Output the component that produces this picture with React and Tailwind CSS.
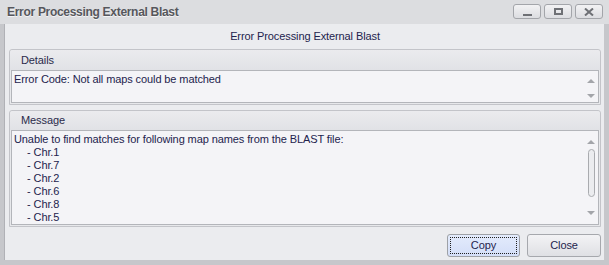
const FONT = { fontFamily: '"Liberation Sans", Arial, sans-serif' }

const CHRS = ['Chr.1', 'Chr.7', 'Chr.2', 'Chr.6', 'Chr.8', 'Chr.5']

function TitleButton({ children }) {
  return (
    <div className="w-[28px] h-[15px] rounded-[3px] border border-[#a3a5aa] bg-gradient-to-b from-[#f2f2f4] to-[#dcdde1] flex items-center justify-center">
      {children}
    </div>
  )
}

function ArrowUp() {
  return <div className="w-0 h-0 border-l-[4px] border-r-[4px] border-b-[4px] border-l-transparent border-r-transparent border-b-[#a3a5aa]" />
}

function ArrowDown() {
  return <div className="w-0 h-0 border-l-[4px] border-r-[4px] border-t-[4px] border-l-transparent border-r-transparent border-t-[#a3a5aa]" />
}

function Group({ title, className, children }) {
  return (
    <div className={`flex flex-col rounded-t-[3px] border border-[#c3c4c9] bg-[#e7e8eb] ${className}`}>
      <div className="h-[20px] flex items-center pl-[11px] text-[11px] text-[#2a2a4a] bg-gradient-to-b from-[#ebebee] to-[#e1e2e6] rounded-t-[3px]">
        {title}
      </div>
      <div className="flex-1 mx-[1px] mb-[1px] border border-[#b3b5ba] bg-[#f4f4f7] flex">
        {children}
      </div>
    </div>
  )
}

export default function App() {
  return (
    <div style={FONT} className="w-[609px] h-[265px] bg-[#c6c7cb] flex flex-col overflow-hidden">
      {/* title bar */}
      <div className="h-[24px] bg-[#dcdde0] flex items-center pl-[7px] pr-[6px] shrink-0">
        <span className="text-[12px] font-bold tracking-[-0.3px] text-[#56575c] [text-shadow:0_1px_0_#f4f4f6] flex-1">
          Error Processing External Blast
        </span>
        <div className="flex gap-[3px] -mt-[1px]">
          <TitleButton>
            <div className="w-[9px] h-[2px] bg-[#6e7075] mt-[6px]" />
          </TitleButton>
          <TitleButton>
            <div className="w-[9px] h-[7px] border-2 border-[#6e7075]" />
          </TitleButton>
          <TitleButton>
            <svg width="10" height="8" viewBox="0 0 10 8">
              <path d="M1 0.5 L9 7.5 M9 0.5 L1 7.5" stroke="#6e7075" strokeWidth="2" />
            </svg>
          </TitleButton>
        </div>
      </div>

      {/* body */}
      <div className="flex-1 ml-[4px] mr-[5px] mb-[5px] border-l border-[#b0b1b6] bg-[#ebecef] flex flex-col pl-[4px] pr-[3px] tracking-[-0.1px]">
        <div className="h-[25px] flex items-center justify-center text-[11px] text-[#23234d]">
          Error Processing External Blast
        </div>

        <Group title="Details" className="h-[56px]">
          <div className="flex-1 pl-[2px] text-[11px] text-[#23234d]">
            Error Code: Not all maps could be matched
          </div>
          <div className="w-[14px] flex flex-col items-center pt-[8px] gap-[11px]">
            <ArrowUp />
            <ArrowDown />
          </div>
        </Group>

        <Group title="Message" className="h-[117px] mt-[5px]">
          <div className="flex-1 pl-[2px] pt-[2px] text-[11px] leading-[13px] text-[#23234d]">
            <div>Unable to find matches for following map names from the BLAST file:</div>
            {CHRS.map((c) => (
              <div key={c} className="pl-[13px]">- {c}</div>
            ))}
          </div>
          <div className="w-[14px] flex flex-col items-center pt-[9px]">
            <ArrowUp />
            <div className="w-[7px] h-[48px] mt-[5px] rounded-full border border-[#a9abaf] bg-[#ebecef]" />
            <div className="mt-[14px]">
              <ArrowDown />
            </div>
          </div>
        </Group>

        <div className="flex justify-end gap-[7px] mt-[7px]">
          <div className="w-[73px] h-[23px] rounded-[3px] border border-[#9ea1a6] bg-gradient-to-b from-[#e3ebfc] to-[#d3def8] p-[2px]">
            <div className="w-full h-full border border-dotted border-[#202020] flex items-center justify-center text-[11px] text-[#23234d]">
              Copy
            </div>
          </div>
          <div className="w-[74px] h-[23px] rounded-[3px] border border-[#a6a8ad] bg-gradient-to-b from-[#f3f3f5] to-[#dfe0e4] flex items-center justify-center text-[11px] text-[#23234d]">
            Close
          </div>
        </div>
      </div>
    </div>
  )
}
